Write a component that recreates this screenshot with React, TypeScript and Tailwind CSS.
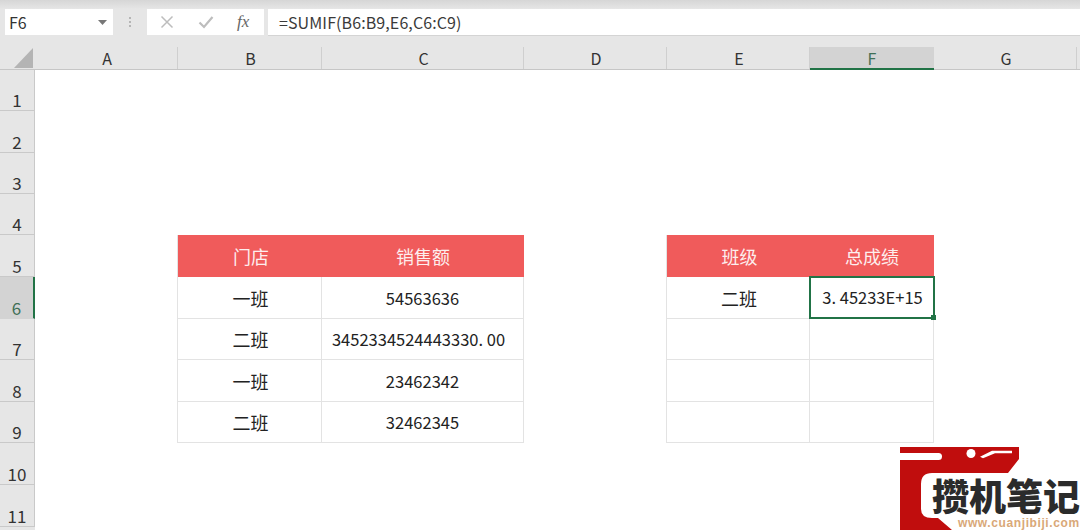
const font = "font-['Noto_Sans_CJK_SC','Noto_Sans',sans-serif]"

const columns = ["A", "B", "C", "D", "E", "F", "G"]
const rowHeights = ["h-[41px]", "h-[42px]", "h-[41px]", "h-[41px]", "h-[42px]", "h-[42px]", "h-[41px]", "h-[42px]", "h-[41px]", "h-[42px]", "h-[42px]"]

const leftTable = [
  ["一班", "54563636"],
  ["二班", "3452334524443330. 00"],
  ["一班", "23462342"],
  ["二班", "32462345"],
]
const rightTable = [["二班", "3. 45233E+15"], ["", ""], ["", ""], ["", ""]]

const colClass = "grid-cols-[35px_143px_144px_202px_143px_143px_124px_143px]"

const FormulaBar = () => (
  <div className="flex h-[28px] items-stretch pl-[5px]">
    <div className="flex h-[26px] w-[108px] items-center justify-between bg-white pl-[4px] pr-[6px] text-[16px] text-[#333]">
      <span>F6</span>
      <svg width="9" height="5" viewBox="0 0 9 5"><path d="M0 0h9L4.5 5z" fill="#777" /></svg>
    </div>
    <div className="flex w-[34px] flex-col items-center justify-center gap-[2px] pb-[2px]">
      <span className="h-[2px] w-[2px] bg-[#b5b5b5]" />
      <span className="h-[2px] w-[2px] bg-[#b5b5b5]" />
      <span className="h-[2px] w-[2px] bg-[#b5b5b5]" />
    </div>
    <div className="flex h-[26px] w-[117px] items-center bg-white pl-[13px]">
      <svg width="14" height="14" viewBox="0 0 14 14" fill="none" stroke="#bdbdbd" strokeWidth="1.5"><path d="M1.5 1.5l11 11M12.5 1.5l-11 11" /></svg>
      <svg className="ml-[24px]" width="16" height="14" viewBox="0 0 16 14" fill="none" stroke="#bdbdbd" strokeWidth="2.2"><path d="M1.5 7.5l4.5 4.5 8.5-10" /></svg>
      <span className="ml-[23px] font-['Liberation_Serif',serif] text-[17px] italic text-[#666]">fx</span>
    </div>
    <div className="ml-[4px] flex h-[27px] flex-1 items-center border-b border-[#d4d4d4] bg-white pl-[11px] text-[16px] tracking-[0.1px] text-[#3a3a3a]">
      =SUMIF(B6:B9,E6,C6:C9)
    </div>
  </div>
)

const ColumnHeader = () => (
  <div className={`grid h-[23px] ${colClass} border-b border-[#c6c6c6]`}>
    <div className="flex items-end justify-end pb-[1px] pr-[2px]">
      <svg width="19" height="20" viewBox="0 0 19 20"><path d="M19 0v20H0z" fill="#b4b4b4" /></svg>
    </div>
    {columns.map((c) => (
      <div
        key={c}
        className={`flex items-center justify-center text-[16px] leading-none ${
          c === "F"
            ? "-mb-px border-b-2 border-[#217346] bg-[#d3d3d3] text-[#3f6f56]"
            : "border-r border-[#cfcfcf] pl-[2px] text-[#333]"
        }`}
      >
        {c}
      </div>
    ))}
  </div>
)

const HeadCell = ({ text, first }: { text: string; first?: boolean }) => (
  <div className={`flex items-center justify-center bg-[#f05b5b] text-[18px] text-[#fdeeee] ${first ? "pl-[2px]" : ""}`}>{text}</div>
)

const NameCell = ({ text }: { text: string }) => (
  <div className="flex items-center justify-center border-b border-r border-[#e3e3e3] pl-[2px] pt-[1px] text-[18px] text-[#222]">{text}</div>
)

const Cell = ({ text, last }: { text: string; last?: boolean }) => (
  <div className={`flex items-center justify-center border-b border-[#e3e3e3] pt-[1px] text-[16.5px] text-[#222] ${last ? "border-r" : ""} ${text.length > 12 ? "pr-[8px]" : ""}`}>
    {text}
  </div>
)

const Sheet = () => (
  <div className="relative flex flex-1 bg-white">
    <div className="w-[35px] shrink-0 bg-[#e6e6e6]">
      {rowHeights.map((h, i) => (
        <div
          key={i}
          className={`${h} flex items-end justify-center border-b border-r pb-[1px] text-[17px] leading-[18px] ${
            i === 5 ? "border-r-2 border-b-[#d3d3d3] border-r-[#217346] bg-[#d3d3d3] text-[#3f6f56]" : "border-[#c9c9c9] text-[#333]"
          }`}
        >
          {i + 1}
        </div>
      ))}
    </div>
    <div className="flex items-start pl-[142px] pt-[165px]">
      <div className="grid w-[347px] grid-cols-[144px_202px] grid-rows-[42px_42px_41px_42px_41px] border-l border-[#e3e3e3]">
        <HeadCell text="门店" first />
        <HeadCell text="销售额" />
        {leftTable.map((row, i) => (
          <div key={i} className="contents">
            <NameCell text={row[0]} />
            <Cell text={row[1]} last />
          </div>
        ))}
      </div>
      <div className="relative ml-[142px] grid w-[268px] grid-cols-[143px_124px] grid-rows-[42px_42px_41px_42px_41px] border-l border-[#e3e3e3]">
        <HeadCell text="班级" first />
        <HeadCell text="总成绩" />
        {rightTable.map((row, i) => (
          <div key={i} className="contents">
            <NameCell text={row[0]} />
            {i === 0 ? (
              <div className="relative -ml-px -mr-px -mt-px flex items-center justify-center border-2 border-[#217346] pl-[1px] text-[16.5px] text-[#222]">
                {row[1]}
                <span className="absolute -bottom-[3px] -right-[3px] h-[5px] w-[5px] bg-[#217346]" />
              </div>
            ) : (
              <Cell text={row[1]} last />
            )}
          </div>
        ))}
      </div>
    </div>
  </div>
)

const Logo = () => (
  <div className="absolute bottom-0 right-0 h-[83px] w-[180px] overflow-hidden">
    <svg className="absolute left-0 top-0" width="180" height="83" viewBox="0 0 180 83">
      <path d="M0 0H119V12L108 26H32Q21 26 21 37V62Q21 71 32 71H38L52 83H0Z" fill="#c00d0d" />
      <rect x="-6" y="6" width="48" height="7" rx="3.5" fill="#fff" />
      <circle cx="71" cy="6.5" r="4.5" fill="#fff" />
      <path d="M80 9.7L92 3.7H112V6.3H95L83 11.3Z" fill="#fff" />
    </svg>
    <div className="absolute left-[32px] top-[31px] whitespace-nowrap text-[37px] font-black leading-[34px] text-[#2b2b2b]">攒机笔记</div>
    <div className="absolute left-[58px] top-[69px] whitespace-nowrap font-['Liberation_Sans',sans-serif] text-[12px] font-bold leading-[14px] tracking-[0.6px] text-[#d9a878]">www.cuanjibiji.com</div>
  </div>
)

export default function App() {
  return (
    <div className={`relative flex h-[530px] w-[1080px] flex-col overflow-hidden bg-[#e6e6e6] ${font}`}>
      <div className="h-[9px] bg-gradient-to-b from-[#d6d6d6] to-[#e6e6e6]" />
      <FormulaBar />
      <div className="h-[10px]" />
      <ColumnHeader />
      <Sheet />
      <Logo />
    </div>
  )
}
